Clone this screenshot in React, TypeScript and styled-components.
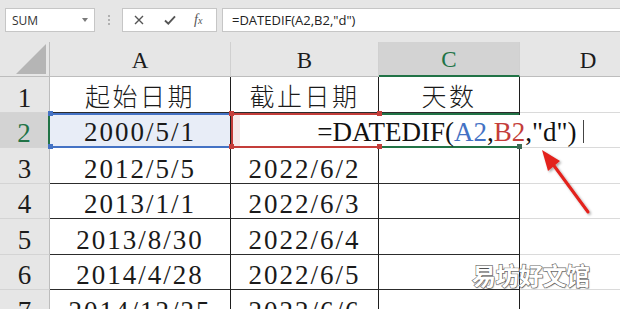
import styled, { createGlobalStyle } from "styled-components";

const GlobalStyle = createGlobalStyle`
  html, body {
    margin: 0;
    padding: 0;
    background: #ffffff;
  }
  body {
    width: 620px;
    height: 309px;
    overflow: hidden;
  }
`;

const GREEN = "#217346";
const BLUE = "#4472c4";
const RED = "#c43e3a";

type Tone = "blue" | "red" | "green";

const toneColor = (t?: Tone) =>
  t === "blue" ? BLUE : t === "red" ? RED : t === "green" ? GREEN : "transparent";

type RowData = { n: number; a: string; b: string };

const rows: RowData[] = [
  { n: 3, a: "2012/5/5", b: "2022/6/2" },
  { n: 4, a: "2013/1/1", b: "2022/6/3" },
  { n: 5, a: "2013/8/30", b: "2022/6/4" },
  { n: 6, a: "2014/4/28", b: "2022/6/5" },
  { n: 7, a: "2014/12/25", b: "2022/6/6" },
];

const App = () => {
  return (
    <Page>
      <GlobalStyle />
      <FormulaBar>
        <NameBox>
          SUM
          <DropArrow />
        </NameBox>
        <Dots>
          <i />
          <i />
          <i />
        </Dots>
        <FuncButtons>
          <svg width="10" height="10" viewBox="0 0 10 10">
            <path d="M1 1L9 9M9 1L1 9" stroke="#555" strokeWidth="1.4" fill="none" />
          </svg>
          <svg width="12" height="10" viewBox="0 0 12 10">
            <path d="M1 5.5L4.3 8.6L11 1.4" stroke="#555" strokeWidth="1.9" fill="none" />
          </svg>
          <Fx>
            f<small>x</small>
          </Fx>
        </FuncButtons>
        <FormulaInput>=DATEDIF(A2,B2,"d")</FormulaInput>
      </FormulaBar>

      <Sheet>
        <Corner>
          <Triangle />
        </Corner>
        <ColHead>A</ColHead>
        <ColHead>B</ColHead>
        <ColHead $active>C</ColHead>
        <ColHead>D</ColHead>

        <RowHead>1</RowHead>
        <Cell $cjk>起始日期</Cell>
        <Cell $cjk>截止日期</Cell>
        <Cell $cjk>天数</Cell>
        <Cell $plain />

        <RowHead $active>2</RowHead>
        <Cell $tone="blue">
          2000/5/1
          <Handle $left $top $color={BLUE} />
          <Handle $left $color={BLUE} />
        </Cell>
        <Cell $tone="red">
          <Handle $left $top $color={RED} />
          <Handle $left $color={RED} />
          <Handle $top $color={RED} />
          <Handle $color={RED} />
        </Cell>
        <Cell $tone="green">
          <Editor>
            =DATEDIF(<Ref $color={BLUE}>A2</Ref>,<Ref $color={RED}>B2</Ref>,"d")
            <Caret />
          </Editor>
          <Handle $color="#3d6b55" />
        </Cell>
        <Cell $plain />

        {rows.map((r) => (
          <Row key={r.n} r={r} />
        ))}
      </Sheet>

      <Arrow width="70" height="85" viewBox="530 140 70 85">
        <defs>
          <filter id="sh" x="-30%" y="-30%" width="160%" height="160%">
            <feDropShadow dx="1.5" dy="1.5" stdDeviation="1.2" floodColor="#000" floodOpacity="0.35" />
          </filter>
        </defs>
        <g filter="url(#sh)">
          <line x1="552" y1="163" x2="588" y2="212" stroke="#e3201b" strokeWidth="3" strokeLinecap="round" />
          <polygon points="542,150 560,161 548,171" fill="#e3201b" />
        </g>
      </Arrow>

      <Watermark>易坊好文馆</Watermark>
    </Page>
  );
};

const Row = ({ r }: { r: RowData }) => (
  <>
    <RowHead>{r.n}</RowHead>
    <Cell>{r.a}</Cell>
    <Cell>{r.b}</Cell>
    <Cell />
    <Cell $plain />
  </>
);

export default App;

const Page = styled.div`
  position: relative;
  width: 620px;
  height: 309px;
  overflow: hidden;
  background: #fff;
`;

const FormulaBar = styled.div`
  display: flex;
  align-items: flex-start;
  height: 42px;
  box-sizing: border-box;
  padding: 8px 0 0 5px;
  background: #e6e6e6;
  font-family: "Open Sans", "Liberation Sans", sans-serif;
`;

const Box = styled.div`
  box-sizing: border-box;
  height: 24px;
  background: #fff;
  border: 1px solid #c6c6c6;
  display: flex;
  align-items: center;
`;

const NameBox = styled(Box)`
  width: 90px;
  justify-content: space-between;
  padding: 0 6px 0 6px;
  font-size: 12px;
  color: #333;
`;

const DropArrow = styled.span`
  width: 0;
  height: 0;
  border-left: 3.5px solid transparent;
  border-right: 3.5px solid transparent;
  border-top: 4px solid #7a7a7a;
`;

const Dots = styled.div`
  width: 27px;
  height: 24px;
  display: flex;
  flex-direction: column;
  align-items: center;
  justify-content: center;
  gap: 2px;

  i {
    width: 2px;
    height: 2px;
    background: #b0b0b0;
  }
`;

const FuncButtons = styled(Box)`
  width: 95px;
  padding-left: 11px;
  gap: 20px;
`;

const Fx = styled.span`
  font-family: "Liberation Serif", serif;
  font-style: italic;
  font-size: 14px;
  color: #555;
  margin-left: -2px;

  small {
    font-size: 10px;
  }
`;

const FormulaInput = styled(Box)`
  flex: 1;
  margin-left: 5px;
  padding-left: 9px;
  border-right: none;
  font-size: 13px;
  color: #222;
`;

const Sheet = styled.div`
  display: grid;
  width: 657px;
  grid-template-columns: 50px 181px 148px 141px 137px;
  grid-template-rows: 35px;
  grid-auto-rows: 35.5px;
  font-family: "Liberation Serif", "Noto Sans CJK SC", serif;
  color: #1a1a1a;
`;

const HeadBase = styled.div<{ $active?: boolean }>`
  box-sizing: border-box;
  display: flex;
  justify-content: center;
  background: ${(p) => (p.$active ? "#d3d3d3" : "#e6e6e6")};
  color: ${(p) => (p.$active ? GREEN : "#1c1c1c")};
`;

const Corner = styled(HeadBase)`
  justify-content: flex-end;
  align-items: flex-end;
  padding: 0 3px 2px 0;
  border-right: 1px solid #bdbdbd;
  border-bottom: 1px solid #bdbdbd;
`;

const Triangle = styled.div`
  width: 0;
  height: 0;
  border-left: 30px solid transparent;
  border-bottom: 30px solid #b5b5b5;
`;

const ColHead = styled(HeadBase)`
  align-items: flex-end;
  font-size: 23px;
  line-height: 23px;
  padding-bottom: 4px;
  border-right: 1px solid #d0d0d0;
  border-bottom: ${(p) => (p.$active ? `2px solid ${GREEN}` : "1px solid #bdbdbd")};
`;

const RowHead = styled(HeadBase)`
  align-items: flex-end;
  font-size: 27px;
  line-height: 27px;
  border-bottom: 1px solid #d4d4d4;
  border-right: ${(p) => (p.$active ? `2px solid ${GREEN}` : "1px solid #bdbdbd")};
`;

const Cell = styled.div<{ $tone?: Tone; $plain?: boolean; $cjk?: boolean }>`
  position: relative;
  box-sizing: border-box;
  display: flex;
  justify-content: center;
  align-items: flex-end;
  white-space: nowrap;
  font-family: ${(p) =>
    p.$cjk ? `"Noto Sans CJK SC", sans-serif` : `"Liberation Serif", serif`};
  font-weight: ${(p) => (p.$cjk ? 300 : 400)};
  font-size: ${(p) => (p.$cjk ? "25px" : "27px")};
  line-height: 27px;
  letter-spacing: ${(p) => (p.$cjk ? "2.5px" : "2px")};
  padding-bottom: ${(p) => (p.$cjk ? "3px" : "0")};
  border-right: ${(p) => (p.$plain ? "none" : p.$tone === "red" ? "none" : "1px solid #1e1e1e")};
  border-bottom: ${(p) =>
    p.$plain ? "1px solid #dadada" : p.$tone ? `2px solid ${toneColor(p.$tone)}` : "1px solid #2c2c2c"};
  box-shadow: ${(p) =>
    p.$tone === "red"
      ? `inset 0 2px 0 ${RED}, inset 2px 0 0 ${RED}, inset -2px 0 0 ${RED}`
      : p.$tone
      ? `inset 0 2px 0 ${toneColor(p.$tone)}`
      : "none"};
  background: ${(p) => (p.$tone === "blue" ? "#e8edf7" : p.$tone === "red" ? "#f7e9e9" : "#fff")};
  z-index: ${(p) => (p.$tone === "green" ? 2 : "auto")};
`;

const Handle = styled.span<{ $left?: boolean; $top?: boolean; $color: string }>`
  position: absolute;
  width: 5px;
  height: 5px;
  background: ${(p) => p.$color};
  ${(p) => (p.$left ? "left: -2px;" : "right: -3px;")}
  ${(p) => (p.$top ? "top: -2px;" : "bottom: -3px;")}
  z-index: 3;
`;

const Editor = styled.div`
  position: absolute;
  top: 2px;
  bottom: 0;
  left: -139px;
  right: -65px;
  display: flex;
  justify-content: flex-end;
  align-items: flex-end;
  background: #fff;
  letter-spacing: 0;
  font-size: 27px;
  line-height: 27px;
  color: #111;
`;

const Ref = styled.span<{ $color: string }>`
  color: ${(p) => p.$color};
`;

const Caret = styled.span`
  align-self: center;
  width: 1.5px;
  height: 23px;
  margin: 2px 0 0 6px;
  background: #444;
`;

const Arrow = styled.svg`
  position: absolute;
  left: 530px;
  top: 140px;
  overflow: visible;
`;

const Watermark = styled.div`
  position: absolute;
  left: 472px;
  top: 257px;
  font-family: "Noto Sans CJK SC", sans-serif;
  font-size: 24px;
  font-weight: 700;
  letter-spacing: -0.5px;
  color: #fff;
  -webkit-text-stroke: 1.2px #6a6a6a;
  paint-order: stroke fill;
  text-shadow: 1px 1px 1px rgba(0, 0, 0, 0.25);
`;
